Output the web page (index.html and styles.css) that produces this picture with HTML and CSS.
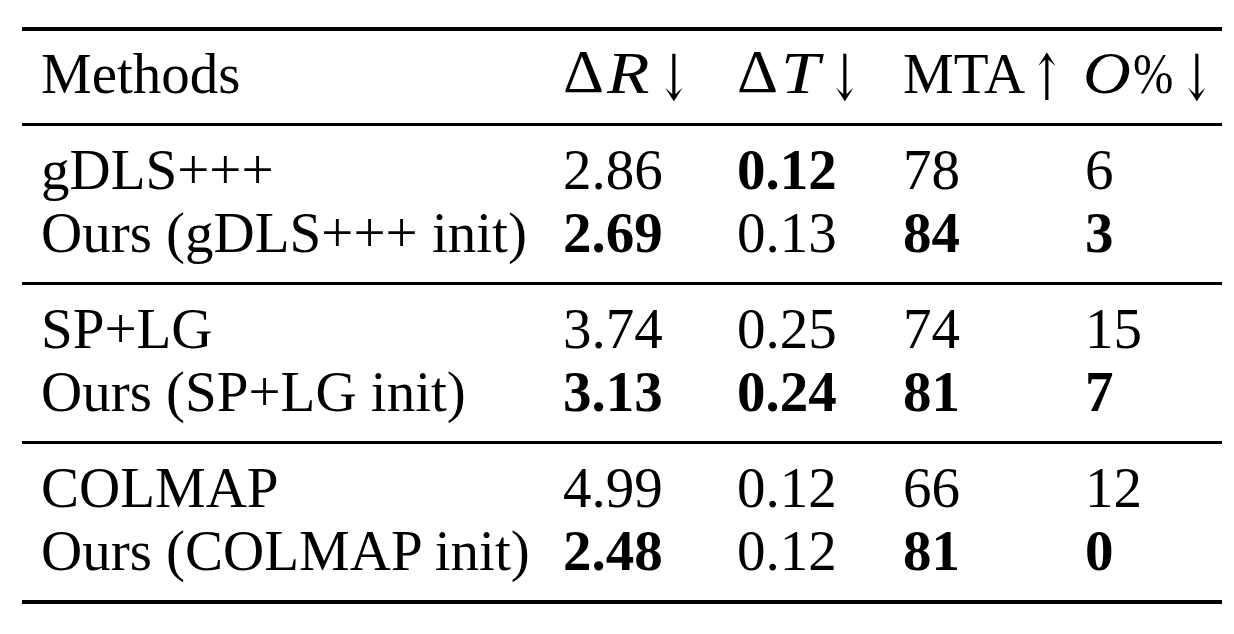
FILE: index.html
```html
<!DOCTYPE html>
<html>
<head>
<meta charset="utf-8">
<link rel="stylesheet" href="styles.css">
</head>
<body>
<div class="tbl">
  <div class="rule heavy"></div>
  <div class="group head">
    <div class="row">
      <span>Methods</span>
      <span><span class="sym">Δ</span><i class="mi">R</i><span class="arr">↓</span></span>
      <span><span class="sym">Δ</span><i class="mi">T</i><span class="arr">↓</span></span>
      <span>MTA<span class="arr tight">↑</span></span>
      <span><i class="mi mo">O</i><span class="pct">%</span><span class="arr near">↓</span></span>
    </div>
  </div>
  <div class="rule light"></div>
  <div class="group">
    <div class="row"><span>gDLS+++</span><span>2.86</span><b>0.12</b><span>78</span><span>6</span></div>
    <div class="row"><span>Ours (gDLS+++ init)</span><b>2.69</b><span>0.13</span><b>84</b><b>3</b></div>
  </div>
  <div class="rule light"></div>
  <div class="group">
    <div class="row"><span>SP+LG</span><span>3.74</span><span>0.25</span><span>74</span><span>15</span></div>
    <div class="row"><span>Ours (SP+LG init)</span><b>3.13</b><b>0.24</b><b>81</b><b>7</b></div>
  </div>
  <div class="rule light"></div>
  <div class="group">
    <div class="row"><span>COLMAP</span><span>4.99</span><span>0.12</span><span>66</span><span>12</span></div>
    <div class="row"><span>Ours (COLMAP init)</span><b>2.48</b><span>0.12</span><b>81</b><b>0</b></div>
  </div>
  <div class="rule heavy"></div>
</div>
</body>
</html>
```

FILE: styles.css
```css
html, body {
  margin: 0;
  padding: 0;
  background: #fff;
}
.tbl {
  margin: 27px 0 0 22px;
  width: 1200px;
  color: #000;
  font-family: "Liberation Serif", "Times New Roman", serif;
  font-size: 57px;
}
.rule {
  background: #000;
}
.rule.heavy {
  height: 4px;
}
.rule.light {
  height: 3px;
}
.group {
  padding: 12px 0 18px 0;
}
.group.head {
  padding: 11px 0 18px 0;
}
.row {
  display: grid;
  grid-template-columns: 522px 174px 166px 182px 1fr;
  padding-left: 19px;
  height: 63px;
  line-height: 63px;
  white-space: nowrap;
}
.row b {
  font-weight: bold;
}
.sym {
  display: inline-block;
  transform: scale(1.12, 1.06);
  transform-origin: left bottom;
  margin-right: 4px;
}
.mi {
  display: inline-block;
  font-style: italic;
  margin-left: 3px;
  transform: scale(1.22, 1.04);
  transform-origin: left bottom;
  margin-right: 3px;
}
.mi.mo {
  margin-left: -2px;
  transform: scale(1.16, 1.04);
  margin-right: 9px;
}
.pct {
  display: inline-block;
  transform: scaleX(0.85);
  transform-origin: left bottom;
}
.arr {
  display: inline-block;
  margin-left: 6px;
  font-family: "DejaVu Serif", "Liberation Serif", serif;
  font-weight: 200;
  transform: translateY(5px) scale(0.72, 1.12);
}
.arr.tight {
  margin-left: -2px;
}
.arr.near {
  margin-left: -8px;
}
```
